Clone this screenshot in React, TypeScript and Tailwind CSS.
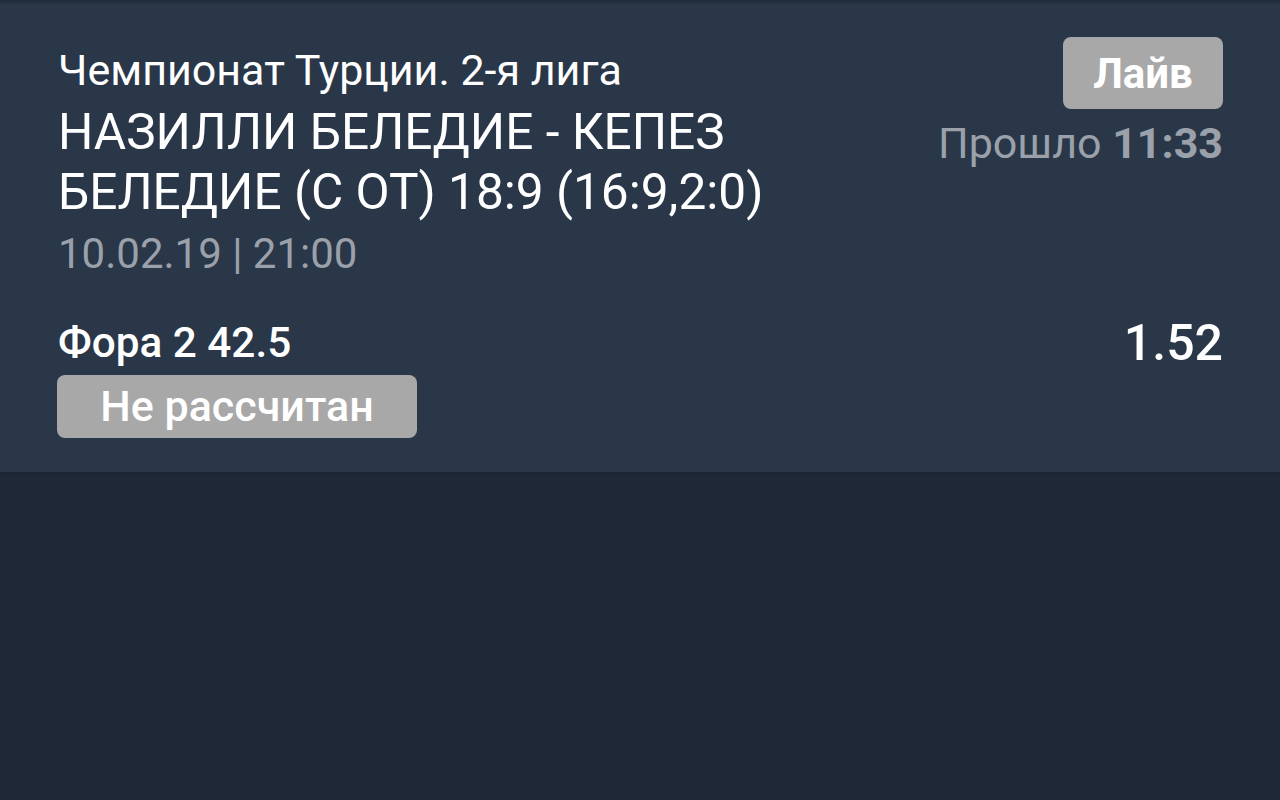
import React from "react";

export default function App() {
  return (
    <div
      className="w-[1280px] h-[800px] bg-[#1f2836] flex flex-col"
      style={{ fontFamily: "Roboto, 'Noto Sans', sans-serif" }}
    >
      <div className="h-[472px] bg-[#293749] relative">
        <div className="absolute inset-x-0 top-0 h-[5px] bg-gradient-to-b from-[#1e2a38] to-[#293749]" />
        <div className="flex justify-between pl-[58px] pr-[57px] pt-[40px]">
          <div className="flex flex-col">
            <div className="text-[43px] leading-[60px] text-white">Чемпионат Турции. 2-я лига</div>
            <div className="text-[49.6px] leading-[60px] text-white w-[790px] mt-[2px]">
              НАЗИЛЛИ БЕЛЕДИЕ - КЕПЕЗ БЕЛЕДИЕ (С ОТ) 18:9 (16:9,2:0)
            </div>
            <div className="text-[42px] leading-[60px] text-[#9ba1aa] mt-[2px]">10.02.19 | 21:00</div>
          </div>
          <div className="flex flex-col items-end">
            <div className="mt-[-3px] h-[72px] w-[160px] rounded-[8px] bg-[#a8a8a8] text-white font-bold text-[42px] flex items-center justify-center">
              Лайв
            </div>
            <div className="text-[43px] leading-[60px] text-[#9ba1aa] mt-[4px]">
              Прошло <span className="font-bold">11:33</span>
            </div>
          </div>
        </div>
        <div className="flex justify-between pl-[58px] pr-[57px] mt-[33px]">
          <div className="flex flex-col items-start">
            <div className="text-[42.3px] leading-[52px] font-medium text-white">Фора 2 42.5</div>
            <div className="mt-[6px] h-[63px] w-[360px] rounded-[8px] bg-[#a8a8a8] text-white font-medium text-[43px] flex items-center justify-center ml-[-1px]">
              Не рассчитан
            </div>
          </div>
          <div className="text-[50px] leading-[52px] font-medium text-white">1.52</div>
        </div>
      </div>
      <div className="h-[6px] bg-gradient-to-b from-[#1b2430] to-[#1f2836]" />
    </div>
  );
}
